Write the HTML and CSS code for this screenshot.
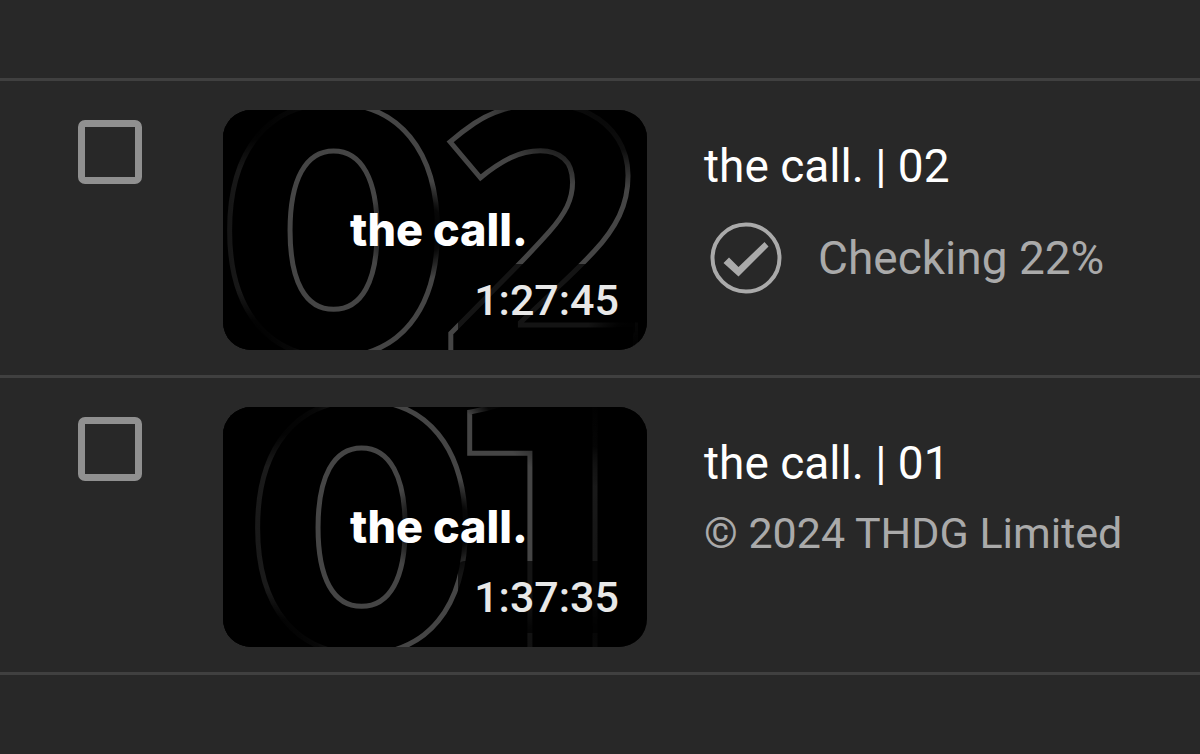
FILE: index.html
```
<!DOCTYPE html>
<html lang="en">
<head>
  <meta charset="UTF-8" />
  <meta name="viewport" content="width=device-width, initial-scale=1.0" />
  <title>Videos</title>
  <link rel="stylesheet" href="styles.css">
</head>
<body>
  <!-- shared fades for the cover art -->
  <svg class="defs" width="0" height="0" aria-hidden="true">
    <defs>
      <radialGradient id="shade">
        <stop offset="0" stop-color="#000" />
        <stop offset="0.5" stop-color="#000" stop-opacity="0.9" />
        <stop offset="1" stop-color="#000" stop-opacity="0" />
      </radialGradient>
      <linearGradient id="shade-left">
        <stop offset="0" stop-color="#000" stop-opacity="0.7" />
        <stop offset="0.6" stop-color="#000" stop-opacity="0.6" />
        <stop offset="1" stop-color="#000" stop-opacity="0" />
      </linearGradient>
    </defs>
  </svg>

  <ul class="video-list">
    <li class="video-row">
      <input type="checkbox" class="select-box" aria-labelledby="title-02">
      <div class="thumb">
        <svg class="cover" viewBox="0 0 424 240" aria-hidden="true">
          <text class="digit" x="-7" y="244">0</text>
          <text class="digit digit-two" x="213" y="262">2</text>
          <rect x="0" y="0" width="60" height="240" fill="url(#shade-left)" />
          <ellipse cx="20" cy="0" rx="110" ry="60" fill="url(#shade)" />
          <ellipse cx="20" cy="240" rx="100" ry="60" fill="url(#shade)" />
          <ellipse cx="195" cy="120" rx="56" ry="50" fill="url(#shade)" />
          <ellipse cx="390" cy="0" rx="130" ry="80" fill="url(#shade)" opacity="0.9" />
          <ellipse cx="410" cy="240" rx="50" ry="60" fill="url(#shade)" />
        </svg>
        <span class="cover-title">the call.</span>
        <span class="duration">1:27:45</span>
      </div>
      <div class="info">
        <h2 class="title" id="title-02">the call. | 02</h2>
        <p class="status">
          <svg class="check-icon" viewBox="0 0 72 72" aria-hidden="true">
            <circle cx="36" cy="36" r="33.5" fill="none" stroke="currentColor" stroke-width="4" />
            <path d="M13.5 41 19 35.5 28.5 45 54.5 20 58.5 24.5 28.5 54.5Z" fill="currentColor" />
          </svg>
          Checking 22%
        </p>
      </div>
    </li>
    <li class="video-row">
      <input type="checkbox" class="select-box" aria-labelledby="title-01">
      <div class="thumb">
        <svg class="cover" viewBox="0 0 424 240" aria-hidden="true">
          <text class="digit" x="21" y="244">0</text>
          <text class="digit digit-one" x="199" y="299">1</text>
          <rect x="0" y="0" width="90" height="240" fill="url(#shade-left)" />
          <ellipse cx="40" cy="0" rx="110" ry="60" fill="url(#shade)" />
          <ellipse cx="40" cy="240" rx="110" ry="60" fill="url(#shade)" />
          <ellipse cx="220" cy="120" rx="60" ry="50" fill="url(#shade)" />
          <ellipse cx="290" cy="0" rx="50" ry="16" fill="url(#shade)" />
          <ellipse cx="380" cy="0" rx="110" ry="80" fill="url(#shade)" />
          <ellipse cx="380" cy="150" rx="60" ry="160" fill="url(#shade)" opacity="0.7" />
          <ellipse cx="340" cy="240" rx="100" ry="50" fill="url(#shade)" opacity="0.8" />
        </svg>
        <span class="cover-title">the call.</span>
        <span class="duration">1:37:35</span>
      </div>
      <div class="info">
        <h2 class="title" id="title-01">the call. | 01</h2>
        <p class="description">© 2024 THDG Limited</p>
      </div>
    </li>
  </ul>
</body>
</html>
```
FILE: styles.css
```
body {
  background: #282828;
  color: #fff;
  font-family: Roboto, sans-serif;
  margin: 0;
}
.defs {
  position: absolute;
}
.video-list {
  list-style: none;
  margin: 0;
  padding: 78px 0;
}
.video-row {
  display: flex;
  align-items: flex-start;
  border-top: 3px solid #404040;
  padding: 29px 24px 25px 78px;
}
.video-row:last-child {
  border-bottom: 3px solid #404040;
}
.select-box {
  appearance: none;
  flex: none;
  box-sizing: border-box;
  width: 64px;
  height: 64px;
  margin: 10px 81px 0 0;
  border: 7px solid #909090;
  border-radius: 7px;
  cursor: pointer;
}
.select-box:checked {
  background: #909090;
}
.thumb {
  position: relative;
  flex: none;
  display: flex;
  align-items: center;
  justify-content: center;
  width: 424px;
  aspect-ratio: 424 / 240;
  border-radius: 28px;
  background: #000;
  overflow: hidden;
}
.cover {
  position: absolute;
  inset: 0;
}
.digit {
  font: 800 340px Inter, sans-serif;
  fill: none;
  stroke: #454545;
  stroke-width: 5px;
}
.digit-two {
  font: 700 370px "Open Sans", sans-serif;
}
.digit-one {
  font: 700 446px "Noto Sans CJK JP", sans-serif;
}
.cover-title {
  position: relative;
  padding-left: 8px;
  font: 800 45px/48px Inter, sans-serif;
}
.duration {
  position: absolute;
  right: 12px;
  bottom: 14px;
  padding: 12px 16px;
  border-radius: 6px;
  background: rgba(0, 0, 0, 0.7);
  color: #e8e8e8;
  font-size: 43px;
  font-weight: 500;
  line-height: 48px;
}
.info {
  min-width: 0;
  padding: 28px 0 0 57px;
}
.title {
  margin: 0;
  font-size: 46px;
  font-weight: 400;
  line-height: 56px;
}
.status,
.description {
  margin: 0;
  color: #aaa;
}
.status {
  display: flex;
  align-items: center;
  gap: 36px;
  margin-top: 28px;
  padding-left: 6px;
  font-size: 46px;
  line-height: 72px;
}
.check-icon {
  flex: none;
  width: 72px;
  height: 72px;
}
.description {
  margin-top: 14px;
  font-size: 43px;
  line-height: 56px;
}
```
